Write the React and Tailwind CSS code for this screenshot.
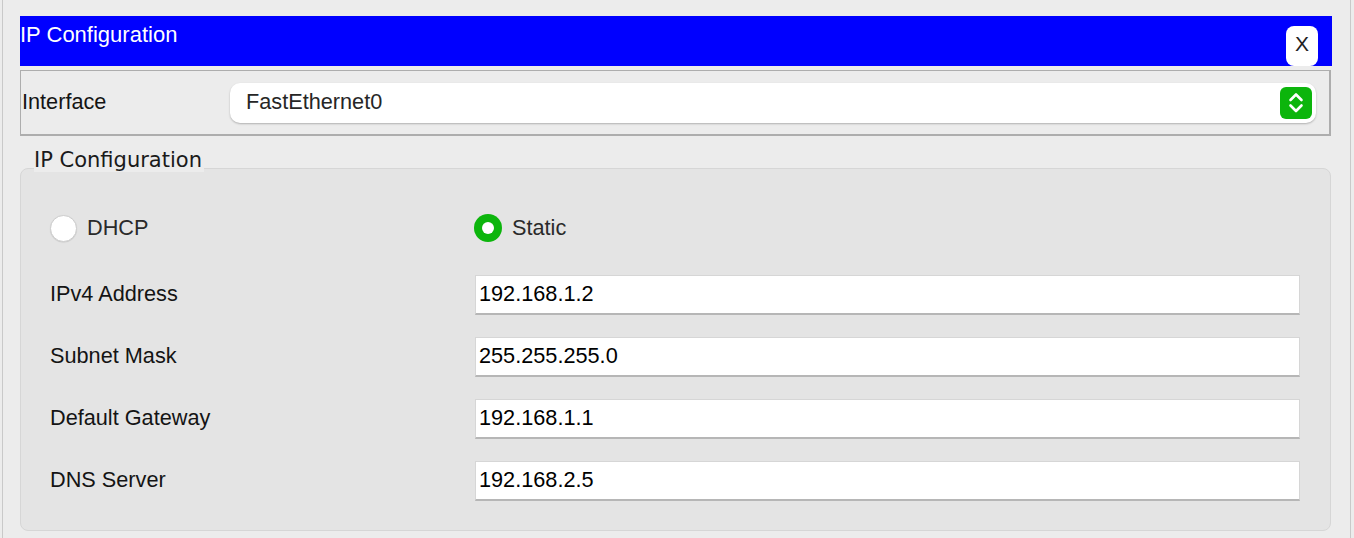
import React from "react";

const sans = { fontFamily: '"Liberation Sans", Arial, Helvetica, sans-serif' };

function Row({ label, value }) {
  return (
    <div className="flex items-center h-[40px]">
      <div className="w-[454px] pl-[29px] pb-[3px] text-[21.7px] text-[#141414] leading-[25px]">{label}</div>
      <div className="w-[825px] h-[40px] bg-white border border-[#d6d6d6] border-b-2 border-b-[#b6b6b6] flex items-center pl-[3px] pb-[2px] text-[21.7px] text-black leading-[25px]">
        {value}
      </div>
    </div>
  );
}

export default function App() {
  return (
    <div className="w-[1354px] h-[538px] bg-[#ececec] pl-[2px] overflow-hidden" style={sans}>
      <div className="w-[1349px] h-[538px] border-l border-r border-[#c9c9c9] pl-[17px] pr-[18px] pt-[16px]">
        {/* Title bar */}
        <div className="h-[50px] bg-[#0000ff] flex justify-between">
          <div className="pt-[6px] text-[22px] leading-[25px] text-white">IP Configuration</div>
          <div className="mt-[10px] mr-[14px] w-[32px] h-[40px] bg-white rounded-[8px] flex items-center justify-center pb-[5px] text-[21px] text-[#222] leading-[24px]">
            X
          </div>
        </div>

        {/* Interface box */}
        <div className="mt-[4px] w-[1311px] h-[66px] border border-[#adadad] border-b-2 border-r-2 flex items-center">
          <div className="w-[209px] pl-[1px] pb-[3px] text-[21.7px] leading-[25px] text-[#141414]">Interface</div>
          <div className="w-[1086px] h-[40px] bg-white rounded-[10px] shadow-[0_1px_2px_rgba(0,0,0,0.25)] flex items-center justify-between">
            <div className="pl-[16px] pb-[3px] text-[21.7px] leading-[25px] text-[#262626]">FastEthernet0</div>
            <div className="mr-[4px] w-[32px] h-[32px] rounded-[6px] bg-[#0cb50c] flex items-center justify-center">
              <svg width="32" height="32" viewBox="0 0 32 32" fill="none" stroke="white" strokeWidth="2.6" strokeLinecap="round" strokeLinejoin="round">
                <path d="M10.5 13 L16 7.5 L21.5 13" />
                <path d="M10.5 18.5 L16 24 L21.5 18.5" />
              </svg>
            </div>
          </div>
        </div>

        {/* Fieldset */}
        <div className="mt-[12px]">
          <div
            className="relative z-10 w-fit ml-[14px] bg-[#ececec] text-[21px] leading-[24px] text-[#1a1a1a] pr-[2px]"
            style={{ fontFamily: '"DejaVu Sans", Verdana, sans-serif' }}
          >
            IP Configuration
          </div>
          <div className="-mt-[4px] w-[1311px] h-[363px] bg-[#e4e4e4] border border-[#d6d6d6] rounded-[8px] pt-[45px] flex flex-col">
            <div className="flex items-center h-[28px]">
              <div className="w-[453px] pl-[29px] flex items-center gap-[10px]">
                <div className="w-[27px] h-[27px] rounded-full bg-white border border-[#cdcdcd] shadow-[0_0.5px_1px_rgba(0,0,0,0.12)]" />
                <span className="pb-[2px] text-[21.7px] leading-[25px] text-[#2a2a2a]">DHCP</span>
              </div>
              <div className="flex items-center gap-[10px]">
                <div className="w-[28px] h-[28px] rounded-full bg-[#0cb50c] flex items-center justify-center">
                  <div className="w-[12px] h-[12px] rounded-full bg-white" />
                </div>
                <span className="pb-[2px] text-[21.7px] leading-[25px] text-[#2a2a2a]">Static</span>
              </div>
            </div>
            <div className="mt-[33px] flex flex-col gap-[22px]">
              <Row label="IPv4 Address" value="192.168.1.2" />
              <Row label="Subnet Mask" value="255.255.255.0" />
              <Row label="Default Gateway" value="192.168.1.1" />
              <Row label="DNS Server" value="192.168.2.5" />
            </div>
          </div>
        </div>
      </div>
    </div>
  );
}
